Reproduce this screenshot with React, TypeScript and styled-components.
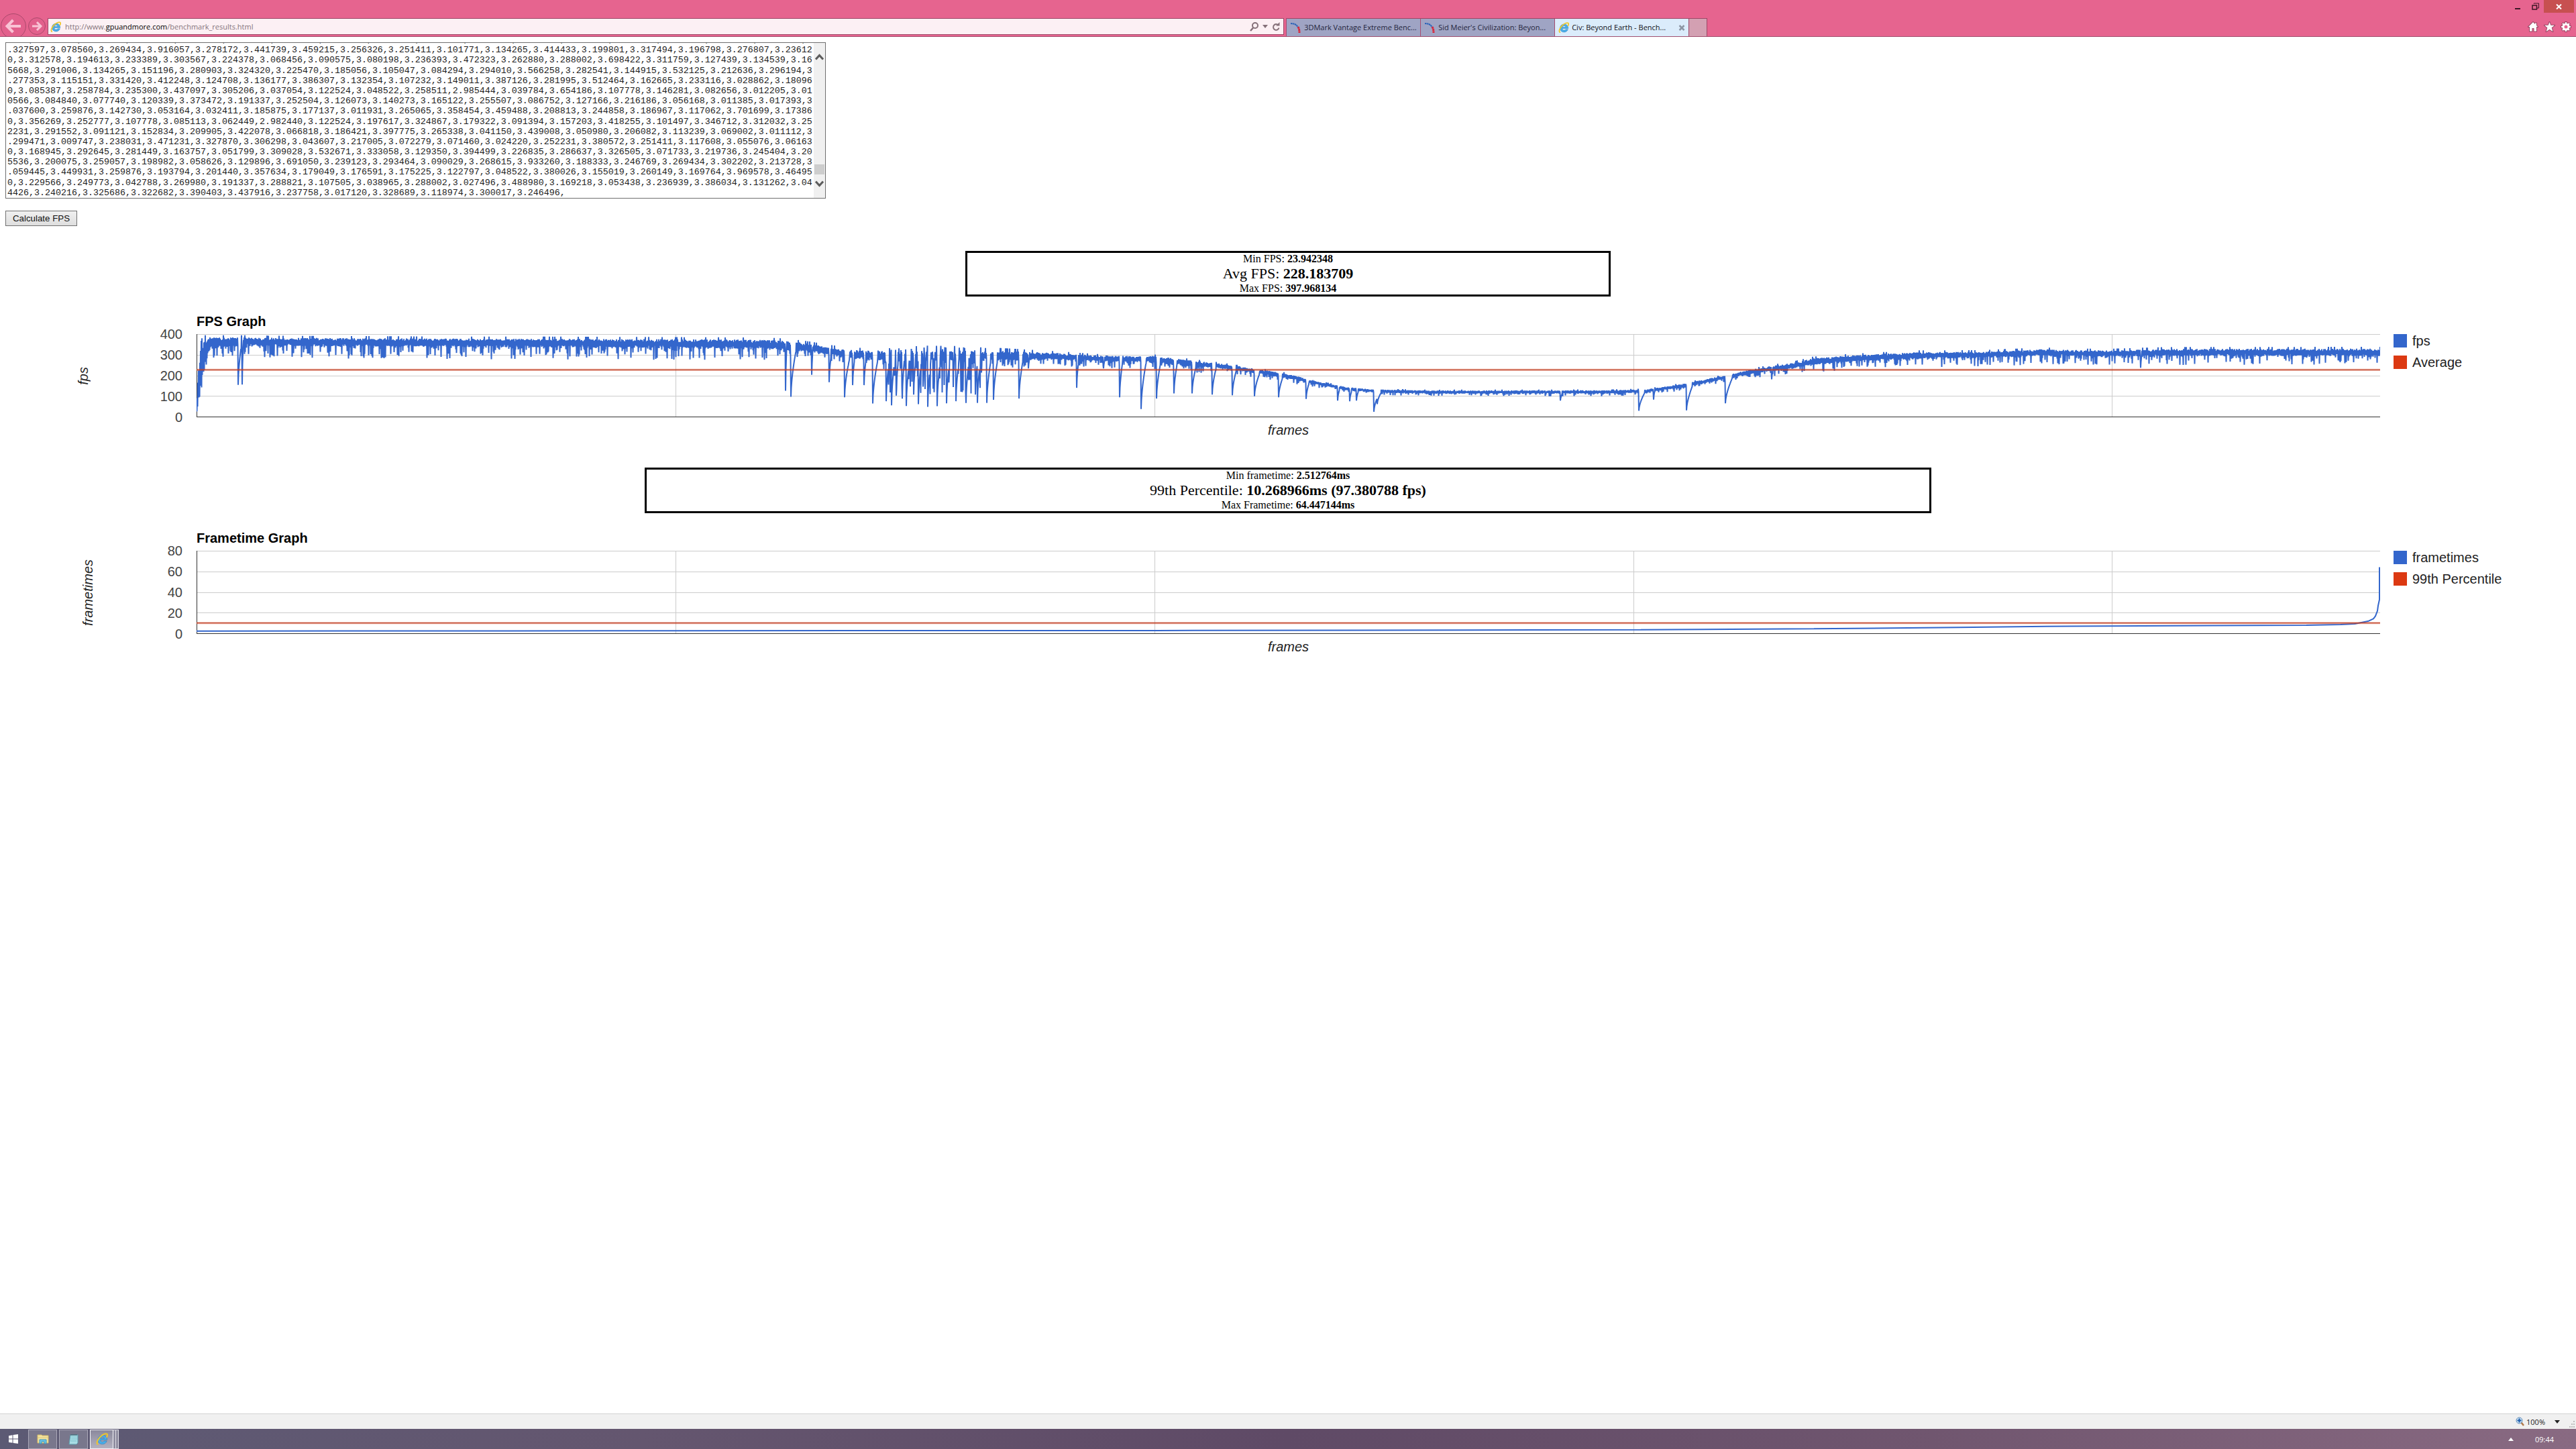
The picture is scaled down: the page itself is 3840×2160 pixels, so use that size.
import { useEffect, useRef } from "react";
import styled, { createGlobalStyle } from "styled-components";

const SANS = '"Liberation Sans", Arial, sans-serif';
const SERIF = '"Liberation Serif", "Times New Roman", serif';
const MONO = '"Liberation Mono", "Courier New", monospace';
const CHROME = '"Open Sans", "Noto Sans", sans-serif';

const GlobalStyle = createGlobalStyle`
  *, *::before, *::after { box-sizing: border-box; }
  body { margin: 0; background: #fff; color: #000; }
`;

/* ---------- data ---------- */

const FRAME_LOG = [
  "4426,3.229566,3.240216,3.151196,3.280903,3.324320,3.225470,3.185056,3.105047,3.084294,3.294010,3.566258,3.282541,3.144915,3.532125,3.212636,3.296194,3",
  ".327597,3.078560,3.269434,3.916057,3.278172,3.441739,3.459215,3.256326,3.251411,3.101771,3.134265,3.414433,3.199801,3.317494,3.196798,3.276807,3.23612",
  "0,3.312578,3.194613,3.233389,3.303567,3.224378,3.068456,3.090575,3.080198,3.236393,3.472323,3.262880,3.288002,3.698422,3.311759,3.127439,3.134539,3.16",
  "5668,3.291006,3.134265,3.151196,3.280903,3.324320,3.225470,3.185056,3.105047,3.084294,3.294010,3.566258,3.282541,3.144915,3.532125,3.212636,3.296194,3",
  ".277353,3.115151,3.331420,3.412248,3.124708,3.136177,3.386307,3.132354,3.107232,3.149011,3.387126,3.281995,3.512464,3.162665,3.233116,3.028862,3.18096",
  "0,3.085387,3.258784,3.235300,3.437097,3.305206,3.037054,3.122524,3.048522,3.258511,2.985444,3.039784,3.654186,3.107778,3.146281,3.082656,3.012205,3.01",
  "0566,3.084840,3.077740,3.120339,3.373472,3.191337,3.252504,3.126073,3.140273,3.165122,3.255507,3.086752,3.127166,3.216186,3.056168,3.011385,3.017393,3",
  ".037600,3.259876,3.142730,3.053164,3.032411,3.185875,3.177137,3.011931,3.265065,3.358454,3.459488,3.208813,3.244858,3.186967,3.117062,3.701699,3.17386",
  "0,3.356269,3.252777,3.107778,3.085113,3.062449,2.982440,3.122524,3.197617,3.324867,3.179322,3.091394,3.157203,3.418255,3.101497,3.346712,3.312032,3.25",
  "2231,3.291552,3.091121,3.152834,3.209905,3.422078,3.066818,3.186421,3.397775,3.265338,3.041150,3.439008,3.050980,3.206082,3.113239,3.069002,3.011112,3",
  ".299471,3.009747,3.238031,3.471231,3.327870,3.306298,3.043607,3.217005,3.072279,3.071460,3.024220,3.252231,3.380572,3.251411,3.117608,3.055076,3.06163",
  "0,3.168945,3.292645,3.281449,3.163757,3.051799,3.309028,3.532671,3.333058,3.129350,3.394499,3.226835,3.286637,3.326505,3.071733,3.219736,3.245404,3.20",
  "5536,3.200075,3.259057,3.198982,3.058626,3.129896,3.691050,3.239123,3.293464,3.090029,3.268615,3.933260,3.188333,3.246769,3.269434,3.302202,3.213728,3",
  ".059445,3.449931,3.259876,3.193794,3.201440,3.357634,3.179049,3.176591,3.175225,3.122797,3.048522,3.380026,3.155019,3.260149,3.169764,3.969578,3.46495",
  "0,3.229566,3.249773,3.042788,3.269980,3.191337,3.288821,3.107505,3.038965,3.288002,3.027496,3.488980,3.169218,3.053438,3.236939,3.386034,3.131262,3.04",
  "4426,3.240216,3.325686,3.322682,3.390403,3.437916,3.237758,3.017120,3.328689,3.118974,3.300017,3.246496,",
].join("\n");

const PLOT_W = 3255;
const PLOT_H = 123;

// [x, upper edge, lower edge, depth of the ordinary dips]
const FPS_BAND: number[][] = [
  [0, 30, 20, 0], [2, 200, 60, 0], [6, 385, 120, 0], [12, 390, 230, 30],
  [18, 386, 330, 45], [60, 386, 342, 50], [100, 384, 345, 60], [350, 380, 340, 60],
  [600, 378, 336, 60], [850, 374, 332, 55], [880, 368, 320, 40],
  [913, 356, 316, 35], [971, 325, 283, 35], [1046, 320, 270, 45],
  [1195, 322, 272, 40], [1270, 312, 278, 35], [1344, 298, 272, 35],
  [1427, 295, 262, 30], [1477, 276, 246, 30], [1527, 258, 236, 25],
  [1577, 235, 212, 20], [1635, 203, 180, 18], [1676, 168, 152, 14],
  [1717, 143, 127, 12], [1759, 133, 119, 12], [1842, 128, 113, 14],
  [2107, 129, 114, 14], [2162, 134, 119, 12], [2217, 161, 143, 15],
  [2272, 198, 179, 15], [2318, 230, 209, 20], [2346, 246, 222, 25],
  [2383, 264, 236, 30], [2410, 284, 252, 38], [2474, 300, 270, 40],
  [2566, 314, 281, 42], [2658, 316, 286, 42], [2750, 328, 296, 42],
  [2842, 322, 292, 40], [2934, 330, 296, 44], [3255, 331, 296, 44],
];

// [x, lowest value, frames needed to recover]
const FPS_DROPS: number[][] = [
  [62, 155, 3], [68, 157, 1], [878, 127, 1], [886, 98, 5], [917, 204, 1],
  [943, 168, 2], [966, 95, 5], [978, 154, 2], [995, 154, 2], [1008, 65, 5],
  [1028, 76, 3], [1036, 56, 3], [1043, 103, 2], [1052, 89, 2], [1058, 53, 3],
  [1069, 108, 2], [1076, 62, 3], [1090, 49, 3], [1104, 52, 3], [1118, 66, 3],
  [1132, 76, 3], [1147, 68, 3], [1161, 108, 2], [1164, 68, 3], [1178, 68, 4],
  [1188, 83, 4], [1226, 89, 4], [1240, 235, 1], [1312, 141, 2], [1352, 235, 1],
  [1376, 95, 3], [1408, 38, 5], [1431, 89, 4], [1457, 114, 3], [1484, 114, 4],
  [1514, 108, 4], [1544, 105, 4], [1577, 100, 5], [1613, 95, 4], [1654, 87, 3],
  [1701, 79, 2], [1719, 76, 2], [1729, 79, 2], [1755, 25, 6], [1760, 62, 4],
  [2033, 79, 2], [2150, 30, 6], [2172, 84, 1], [2221, 32, 6], [2279, 66, 7],
  [2348, 182, 1], [2898, 238, 1],
];

const FRAMETIMES: number[][] = [
  [0, 2.5], [607, 2.7], [1431, 3], [1895, 3.4], [2153, 3.8], [2411, 4.7],
  [2627, 6], [2793, 7.2], [3007, 7.8], [3145, 8.2], [3196, 8.7], [3217, 9.5],
  [3227, 10.8], [3238, 12.2], [3245, 14.4], [3248, 17], [3251, 22],
  [3252, 27], [3254, 33], [3254, 64.4],
];

function random(seed: number) {
  let s = seed;
  return () => {
    s = (s * 1664525 + 1013904223) % 4294967296;
    return s / 4294967296;
  };
}

function bandAt(x: number) {
  let i = 1;
  while (i < FPS_BAND.length - 1 && FPS_BAND[i][0] < x) i += 1;
  const a = FPS_BAND[i - 1];
  const b = FPS_BAND[i];
  const t = Math.min(1, Math.max(0, (x - a[0]) / (b[0] - a[0])));
  return [1, 2, 3].map((k) => a[k] + (b[k] - a[k]) * t);
}

function fpsSeries() {
  const rnd = random(4711);
  const points: number[][] = [];
  for (let x = 0; x <= PLOT_W; x += 0.5) {
    const [top, low, dip] = bandAt(x);
    // neighbouring frames swing between the two edges of the band
    const upper = (x * 2) % 2 === 0;
    let v = low + (top - low) * (upper ? 0.65 + 0.35 * rnd() : 0.3 * rnd());
    if (!upper && rnd() < 0.34) v = low - dip * Math.pow(rnd(), 1.7);
    if (upper && rnd() < 0.06) v = Math.min(396, top + (top - low) * 0.25);
    if (x > 1026 && x < 1172) {
      const r = rnd();
      if (r < 0.24) v = 110 + 170 * rnd();
      else if (r > 0.9) v = top + 25 * rnd();
    }
    for (const [dx, min, rec] of FPS_DROPS) {
      const d = x - dx;
      if (d === 0) v = min;
      else if (d > 0 && d < rec * 1.5) v = Math.min(v, min + (low - min) * Math.pow(d / (rec * 1.5), 0.6));
    }
    points.push([x, v]);
  }
  return points;
}

const FPS_POINTS = fpsSeries();

const toPoints = (series: number[][], max: number) =>
  series.map(([x, v]) => `${x},${(0.5 + PLOT_H * (1 - v / max)).toFixed(1)}`).join(" ");

/* ---------- browser frame ---------- */

const Page = styled.div`
  display: flex;
  flex-direction: column;
  min-height: 100vh;
`;

const Toolbar = styled.header`
  display: flex;
  height: 55px;
  background: #e6648f;
  border-bottom: 1px solid #a0506f;
  font-family: ${CHROME};
`;

const NavButtons = styled.nav`
  display: flex;
  align-items: flex-end;
  overflow: hidden;
`;

const BareButton = styled.button`
  display: flex;
  align-items: center;
  justify-content: center;
  padding: 0;
  border: 0;
  background: none;
  color: inherit;
  font: inherit;
`;

const AddressBar = styled.form`
  display: flex;
  flex: 0 0 48%;
  align-items: center;
  gap: 6px;
  height: 25px;
  margin-top: 27px;
  padding: 0 4px 0 3px;
  border: 1px solid #9c4666;
  background: #fcf0f4;
  color: #7d6a72;
`;

const Url = styled.div`
  flex: 1;
  font-size: 11px;
  line-height: 20px;
  color: #85757c;

  a { color: inherit; text-decoration: none; }
  strong { font-weight: 400; color: #000; }
`;

const TabStrip = styled.div`
  display: flex;
  flex: 1 1 0;
  align-self: flex-end;
  margin-left: 3px;
`;

const Tab = styled.div<{ $active?: boolean }>`
  display: flex;
  align-items: center;
  width: 200px;
  height: 27px;
  padding: 0 5px;
  gap: 4px;
  border-top: 1px solid #9c4666;
  border-left: 1px solid #a64c70;
  background: ${(p) => (p.$active ? "#dbecfb" : "#9fa4c4")};
  color: ${(p) => (p.$active ? "#101018" : "#24243c")};
`;

const TabLabel = styled.button`
  flex: 1;
  padding: 0;
  border: 0;
  background: none;
  color: inherit;
  font-family: inherit;
  font-size: 11px;
  line-height: 20px;
  text-align: left;
  white-space: nowrap;
`;

const NewTab = styled.button`
  width: 28px;
  height: 27px;
  padding: 0;
  border: 1px solid #9c4666;
  border-bottom: 0;
  background: #d3a0b2;
`;

const WindowTools = styled.div`
  display: flex;
  flex-direction: column;
  align-items: flex-end;
  justify-content: space-between;
  padding: 0 3px 6px 0;
`;

const WindowButtons = styled.div`
  display: flex;
  height: 19px;
`;

const WindowButton = styled(BareButton)<{ $close?: boolean }>`
  width: ${(p) => (p.$close ? "45px" : "26px")};
  height: 19px;
  background: ${(p) => (p.$close ? "#c75050" : "transparent")};
`;

const ToolButtons = styled.div`
  display: flex;
  gap: 8px;
  padding-right: 4px;
`;

/* ---------- page content ---------- */

const Main = styled.main`
  flex: 1;
  padding: 8px;
`;

const LogFrame = styled.div`
  display: flex;
  width: 1223px;
  max-width: 100%;
  height: 233px;
  border: 1px solid #6e6e6e;
`;

const LogArea = styled.textarea`
  display: block;
  flex: 1;
  min-width: 0;
  height: 231px;
  padding: 0 2px;
  border: 0;
  outline: 0;
  resize: none;
  overflow: hidden;
  background: #fff;
  color: #1c1c1c;
  font-family: ${MONO};
  font-size: 10pt;
  line-height: 1.14;
  white-space: pre;
`;

const ScrollTrack = styled.div`
  display: flex;
  flex-direction: column;
  justify-content: space-between;
  align-items: center;
  width: 17px;
  padding: 16px 0;
  background: #f0f0f0;
`;

const ScrollRail = styled.div`
  display: flex;
  flex: 1;
  flex-direction: column;
  justify-content: flex-end;
  padding-bottom: 9px;
`;

const ScrollThumb = styled.div`
  width: 15px;
  height: 15px;
  background: #cdcdcd;
`;

const CalcButton = styled.button`
  display: block;
  width: 107px;
  height: 23px;
  margin-top: 18px;
  padding: 0;
  border: 1px solid #707070;
  background: linear-gradient(#f0f0f0, #dedede);
  color: #111;
  font-family: ${SANS};
  font-size: 10pt;
`;

const StatBox = styled.section<{ $width: string; $gap: number }>`
  box-sizing: content-box;
  width: ${(p) => p.$width};
  margin: ${(p) => p.$gap}px auto 0;
  border: 3px solid #000;
  font-family: ${SERIF};
  text-align: center;
`;

const Stat = styled.p<{ $large?: boolean }>`
  margin: 0;
  font-size: ${(p) => (p.$large ? "22px" : "16px")};
  line-height: ${(p) => (p.$large ? "26px" : "18px")};
`;

const Chart = styled.figure`
  display: grid;
  grid-template-columns: 285px minmax(0, 1fr) 284px;
  row-gap: 7px;
  margin: 25px 0 0;
  font-family: ${SANS};
  font-size: 20px;
  line-height: 24px;
  color: #222;
`;

const ChartTitle = styled.figcaption`
  grid-column: 2;
  color: #000;
  font-weight: 700;
`;

const Scale = styled.div`
  display: flex;
  grid-row: 2;
  grid-column: 1;
  justify-content: space-between;
  padding-right: 21px;
`;

const AxisName = styled.div<{ $indent: number }>`
  align-self: center;
  margin-left: ${(p) => p.$indent}px;
  font-style: italic;
  writing-mode: vertical-rl;
  transform: rotate(180deg);
`;

const Ticks = styled.div`
  display: flex;
  flex-direction: column;
  justify-content: space-between;
  margin: -12px 0;
  color: #444;
  text-align: right;
`;

const Plot = styled.svg`
  display: block;
  grid-row: 2;
  grid-column: 2;
  width: 100%;
  height: 124px;
`;

const Legend = styled.ul`
  display: flex;
  flex-direction: column;
  grid-row: 2;
  grid-column: 3;
  gap: 12px;
  margin: 0;
  padding: 0 0 0 20px;
  list-style: none;
`;

const LegendItem = styled.li<{ $color: string }>`
  display: flex;
  gap: 8px;
  align-items: center;
  height: 20px;

  &::before {
    content: "";
    width: 20px;
    height: 20px;
    background: ${(p) => p.$color};
  }
`;

const FrameAxis = styled.div`
  grid-row: 3;
  grid-column: 2;
  font-style: italic;
  text-align: center;
`;

/* ---------- bottom bars ---------- */

const StatusBar = styled.footer`
  display: flex;
  align-items: center;
  justify-content: flex-end;
  height: 23px;
  border-top: 1px solid #d2d2d2;
  background: #f0f0f0;
  color: #222;
  font-family: ${CHROME};
  font-size: 11px;
`;

const ZoomButton = styled(BareButton)`
  gap: 3px;
`;

const ZoomArrow = styled(BareButton)`
  width: 36px;
`;

const Taskbar = styled.footer`
  display: flex;
  align-items: center;
  height: 30px;
  padding-right: 33px;
  background: linear-gradient(90deg, #5c5a74 0%, #64566f 25%, #5f4a66 50%, #70566f 75%, #896a82 100%);
`;

const StartButton = styled(BareButton)`
  width: 40px;
  margin-right: 2px;
  height: 30px;
`;

const TaskButton = styled(BareButton)<{ $active?: boolean }>`
  width: ${(p) => (p.$active ? "35px" : "43px")};
  height: 29px;
  margin-right: ${(p) => (p.$active ? "0" : "3px")};
  border: 1px solid ${(p) => (p.$active ? "#f4f4f8" : "#aaa8b8")};
  background: ${(p) => (p.$active ? "linear-gradient(#8b899c, #b3b1c0)" : "#79778c")};
`;

const StackEdge = styled.span`
  width: 4px;
  height: 29px;
  border: 1px solid #dcdce4;
  border-left: 0;
  background: #8f8da0;
`;

const Tray = styled.div`
  display: flex;
  align-items: center;
  gap: 32px;
  margin-left: auto;
  color: #fff;
  font-family: ${CHROME};
  font-size: 11px;
`;

/* ---------- icons ---------- */

const IeIcon = ({ size }: { size: number }) => (
  <svg width={size} height={size} viewBox="0 0 18 18" aria-hidden="true">
    <path d="M16.600 10.600H6.700c.2 1.900 1.300 2.900 3 2.900 1.200 0 2-.5 2.500-1.400h4c-1 3-3.400 4.700-6.500 4.700-4.100 0-6.800-2.700-6.800-6.600s2.700-6.700 6.800-6.700c4.400 0 7 2.900 6.900 7.100zM6.800 8.400h5.700c-.3-1.500-1.300-2.300-2.800-2.300s-2.600.8-2.900 2.300z" fill="#49aee8" stroke="#2277b8" strokeWidth=".5" />
    <path d="M2.600 17C.4 15.700 2 10.600 5.900 6.400 9.700 2.300 14.700.2 16.500 1.600c1 .9.700 2.600-.4 4.400" fill="none" stroke="#edc62c" strokeWidth="2" strokeLinecap="round" />
  </svg>
);

const CurveIcon = () => (
  <svg width="17" height="17" viewBox="0 0 17 17" aria-hidden="true">
    <path d="M1 2c6 0 9 2 11 6" fill="none" stroke="#2a62b8" strokeWidth="2" strokeDasharray="2.500 .5" />
    <path d="M12 7c1.500 2.500 2 5 2 9" fill="none" stroke="#d8283c" strokeWidth="3" strokeDasharray="3 .5" />
  </svg>
);

const BackIcon = () => (
  <svg width="41" height="34" viewBox="0 0 41 34" aria-hidden="true">
    <circle cx="20" cy="19" r="18.500" fill="#e2608c" stroke="#ab4a6c" />
    <path d="M31 19H12M19.500 10l-9 9 9 9" fill="none" stroke="#f9c3d5" strokeWidth="4" />
  </svg>
);

const ForwardIcon = () => (
  <svg width="30" height="34" viewBox="0 0 30 34" aria-hidden="true">
    <circle cx="14" cy="19" r="12.500" fill="#e2608c" stroke="#ab4a6c" />
    <path d="M7 19h12M14 13l6 6-6 6" fill="none" stroke="#f9c3d5" strokeWidth="3" />
  </svg>
);

const Caret = ({ up, color }: { up?: boolean; color: string }) => (
  <svg width="8" height="5" viewBox="0 0 8 5" aria-hidden="true">
    <path d={up ? "M0 5 4 0l4 5z" : "M0 0h8L4 5z"} fill={color} />
  </svg>
);

const Chevron = ({ up }: { up?: boolean }) => (
  <svg width="13" height="10" viewBox="0 0 13 10" aria-hidden="true">
    <path d={up ? "M1 8.500 6.500 2.500 12 8.500" : "M1 1.500 6.500 7.500 12 1.500"} fill="none" stroke="#5c5c5c" strokeWidth="3" />
  </svg>
);

/* ---------- composed parts ---------- */

type ChartProps = {
  title: string;
  axis: string;
  axisIndent: number;
  ticks: number[];
  points: number[][];
  level: number;
  legend: [string, string];
};

function LineChart({ title, axis, axisIndent, ticks, points, level, legend }: ChartProps) {
  const max = ticks[0];
  const y = (v: number) => 0.5 + PLOT_H * (1 - v / max);
  return (
    <Chart>
      <ChartTitle>{title}</ChartTitle>
      <Scale>
        <AxisName $indent={axisIndent}>{axis}</AxisName>
        <Ticks>
          {ticks.map((t) => (
            <span key={t}>{t}</span>
          ))}
        </Ticks>
      </Scale>
      <Plot viewBox={`0 0 ${PLOT_W} ${PLOT_H + 1}`} preserveAspectRatio="none" role="img" aria-label={title}>
        <g stroke="#ccc" shapeRendering="crispEdges">
          {ticks.slice(0, -1).map((t) => (
            <line key={t} x1="0" x2={PLOT_W} y1={y(t)} y2={y(t)} />
          ))}
          {[714, 1428, 2142, 2855].map((x) => (
            <line key={x} x1={x + 0.5} x2={x + 0.5} y1="0" y2={PLOT_H} />
          ))}
        </g>
        <g fill="#333" shapeRendering="crispEdges">
          <rect x="0" y="0" width="1" height={PLOT_H + 1} />
          <rect x="0" y={PLOT_H} width={PLOT_W} height="1" />
        </g>
        <polyline points={toPoints(points, max)} fill="none" stroke="#36c" strokeWidth="2" strokeLinejoin="bevel" />
        <line x1="0" x2={PLOT_W} y1={y(level)} y2={y(level)} stroke="#dc3912" strokeOpacity=".45" strokeWidth="3" />
        <line x1="0" x2={PLOT_W} y1={y(level)} y2={y(level)} stroke="#b0402c" />
      </Plot>
      <Legend>
        <LegendItem $color="#36c">{legend[0]}</LegendItem>
        <LegendItem $color="#dc3912">{legend[1]}</LegendItem>
      </Legend>
      <FrameAxis>frames</FrameAxis>
    </Chart>
  );
}

function BrowserToolbar() {
  return (
    <Toolbar>
      <NavButtons aria-label="History">
        <BareButton aria-label="Back"><BackIcon /></BareButton>
        <BareButton aria-label="Forward"><ForwardIcon /></BareButton>
      </NavButtons>
      <AddressBar>
        <IeIcon size={16} />
        <Url>
          <a href="http://www.gpuandmore.com/benchmark_results.html">
            http://www.<strong>gpuandmore.com</strong>/benchmark_results.html
          </a>
        </Url>
        <BareButton type="button" aria-label="Search">
          <svg width="13" height="14" viewBox="0 0 13 14"><circle cx="8" cy="5" r="4" fill="none" stroke="#857079" strokeWidth="2" /><path d="M5 8.500 1 13" stroke="#857079" strokeWidth="2.500" /></svg>
        </BareButton>
        <BareButton type="button" aria-label="Address list"><Caret color="#857079" /></BareButton>
        <BareButton type="button" aria-label="Refresh">
          <svg width="13" height="14" viewBox="0 0 13 14"><path d="M9.500 4.500A4.300 4.300 0 1 0 10.500 8.500" fill="none" stroke="#857079" strokeWidth="2" /><path d="M6 5.500h5.500V0z" fill="#857079" /></svg>
        </BareButton>
      </AddressBar>
      <TabStrip>
        <Tab><CurveIcon /><TabLabel>3DMark Vantage Extreme Benc...</TabLabel></Tab>
        <Tab><CurveIcon /><TabLabel>Sid Meier's Civilization: Beyon...</TabLabel></Tab>
        <Tab $active>
          <IeIcon size={16} />
          <TabLabel>Civ: Beyond Earth - Bench...</TabLabel>
          <BareButton aria-label="Close tab">
            <svg width="10" height="9" viewBox="0 0 10 9"><path d="m1.500 1 7 7m0-7-7 7" stroke="#8c96a4" strokeWidth="2.500" /></svg>
          </BareButton>
        </Tab>
        <NewTab aria-label="New tab" />
      </TabStrip>
      <WindowTools>
        <WindowButtons>
          <WindowButton aria-label="Minimize">
            <svg width="8" height="10" viewBox="0 0 8 10"><path d="M0 7h8v2H0z" fill="#3c1626" /></svg>
          </WindowButton>
          <WindowButton aria-label="Restore">
            <svg width="11" height="11" viewBox="0 0 11 11"><path d="M3 1.500V1h7.500v7H8" fill="none" stroke="#3c1626" /><path d="M1 4h6.500v6H1z" fill="none" stroke="#3c1626" strokeWidth="1.500" /></svg>
          </WindowButton>
          <WindowButton $close aria-label="Close">
            <svg width="9" height="8" viewBox="0 0 9 8"><path d="m1 .5 7 7m0-7-7 7" stroke="#fff" strokeWidth="2" /></svg>
          </WindowButton>
        </WindowButtons>
        <ToolButtons>
          <BareButton aria-label="Home">
            <svg width="16" height="16" viewBox="0 0 16 16"><path d="M8 1 1 8h2v6.500h3.500V10h3v4.500H13V8h2l-2-2V2.500h-2V4z" fill="#fff" stroke="#9a4565" strokeWidth="2" paintOrder="stroke" /></svg>
          </BareButton>
          <BareButton aria-label="Favorites">
            <svg width="17" height="16" viewBox="0 0 17 16"><path d="m8.500 1 1.900 4.800H16l-4.300 3.400L13.300 15l-4.800-3.300L3.700 15l1.600-5.800L1 5.800h5.600z" fill="#fff" stroke="#9a4565" strokeWidth="2" paintOrder="stroke" /></svg>
          </BareButton>
          <BareButton aria-label="Tools">
            <svg width="16" height="16" viewBox="0 0 16 16">
              <path d="M8 0v16M0 8h16M2.300 2.300l11.400 11.400M13.700 2.300 2.300 13.700" stroke="#9a4565" strokeWidth="4" />
              <circle cx="8" cy="8" r="6" fill="#9a4565" />
              <path d="M8 1v14M1 8h14M3 3l10 10M13 3 3 13" stroke="#fff" strokeWidth="2" />
              <circle cx="8" cy="8" r="4" fill="#e6648f" stroke="#fff" strokeWidth="3" />
            </svg>
          </BareButton>
        </ToolButtons>
      </WindowTools>
    </Toolbar>
  );
}

function FrameLog() {
  const area = useRef<HTMLTextAreaElement>(null);
  useEffect(() => {
    if (area.current) area.current.scrollTop = area.current.scrollHeight;
  }, []);
  return (
    <LogFrame>
      <LogArea ref={area} aria-label="Frametimes" wrap="off" spellCheck={false} defaultValue={FRAME_LOG} />
      <ScrollTrack aria-hidden="true">
        <Chevron up />
        <ScrollRail><ScrollThumb /></ScrollRail>
        <Chevron />
      </ScrollTrack>
    </LogFrame>
  );
}

function BottomBars() {
  return (
    <>
      <StatusBar>
        <ZoomButton aria-label="Zoom level 100%">
          <svg width="13" height="14" viewBox="0 0 13 14"><path d="m8 8 4 5" stroke="#b07848" strokeWidth="2.500" /><circle cx="5.500" cy="5.500" r="4.500" fill="#cfe4f6" stroke="#5c88b4" /><path d="M5.500 2.500v6M2.500 5.500h6" stroke="#1c5cac" strokeWidth="2" /></svg>
          100%
        </ZoomButton>
        <ZoomArrow aria-label="Change zoom level"><Caret color="#222" /></ZoomArrow>
        <svg width="10" height="17" viewBox="0 0 10 17" aria-hidden="true">
          <path d="M6 7h2v2H6zM3 11h2v2H3zM6 11h2v2H6zM0 15h2v2H0zM3 15h2v2H3zM6 15h2v2H6z" fill="#bcbcbc" />
        </svg>
      </StatusBar>
      <Taskbar>
        <StartButton aria-label="Start">
          <svg width="14" height="14" viewBox="0 0 14 14"><path d="M0 2.200 5.500 1.300V6.500H0zM6.500 1.100 14 0v6.500H6.500zM0 7.500h5.500v5.200L0 11.900zM6.500 7.500H14V14l-7.500-1.100z" fill="#fff" /></svg>
        </StartButton>
        <TaskButton aria-label="File Explorer">
          <svg width="18" height="16" viewBox="0 0 18 16"><path d="M1 2h6l1 1h9v11H1z" fill="#f2e3a0" stroke="#d6bc66" /><path d="M1 6h16" stroke="#dcc878" /><path d="M4 15V9h10v6h-3v-3H7v3z" fill="#6cc4e4" stroke="#3c94bc" /></svg>
        </TaskButton>
        <TaskButton aria-label="Notepad">
          <svg width="15" height="17" viewBox="0 0 15 17"><path d="M3 2h11v12l-2 2H1z" fill="#a8dce4" stroke="#5c9cac" /><path d="M4 5h9M4 8h9M3 11h9" stroke="#7cc0cc" /><path d="M4 1v2M6 1v2M8 1v2M10 1v2M12 1v2" stroke="#3c5864" /></svg>
        </TaskButton>
        <TaskButton $active aria-label="Internet Explorer"><IeIcon size={18} /></TaskButton>
        <StackEdge />
        <StackEdge />
        <Tray>
          <BareButton aria-label="Show hidden icons"><Caret up color="#fff" /></BareButton>
          <time>09:44</time>
        </Tray>
      </Taskbar>
    </>
  );
}

export default function App() {
  return (
    <Page>
      <GlobalStyle />
      <BrowserToolbar />
      <Main>
        <FrameLog />
        <CalcButton>Calculate FPS</CalcButton>

        <StatBox $width="25%" $gap={37}>
          <Stat>Min FPS: <b>23.942348</b></Stat>
          <Stat $large>Avg FPS: <b>228.183709</b></Stat>
          <Stat>Max FPS: <b>397.968134</b></Stat>
        </StatBox>
        <LineChart
          title="FPS Graph"
          axis="fps"
          axisIndent={104}
          ticks={[400, 300, 200, 100, 0]}
          points={FPS_POINTS}
          level={228.18}
          legend={["fps", "Average"]}
        />

        <StatBox $width="50%" $gap={44}>
          <Stat>Min frametime: <b>2.512764ms</b></Stat>
          <Stat $large>99th Percentile: <b>10.268966ms (97.380788 fps)</b></Stat>
          <Stat>Max Frametime: <b>64.447144ms</b></Stat>
        </StatBox>
        <LineChart
          title="Frametime Graph"
          axis="frametimes"
          axisIndent={111}
          ticks={[80, 60, 40, 20, 0]}
          points={FRAMETIMES}
          level={10.27}
          legend={["frametimes", "99th Percentile"]}
        />
      </Main>
      <BottomBars />
    </Page>
  );
}
